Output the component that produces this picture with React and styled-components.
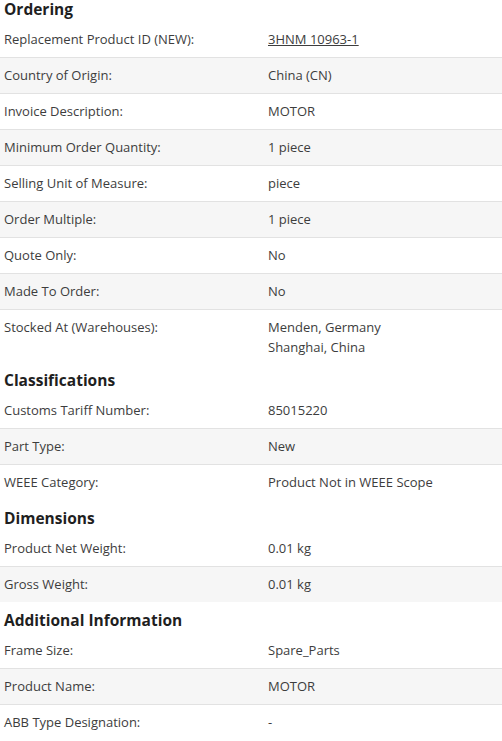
import React from 'react';
import styled, { createGlobalStyle } from 'styled-components';

const GlobalStyle = createGlobalStyle`
  body {
    margin: 0;
    background: #fff;
    font-family: "Open Sans", "Liberation Sans", sans-serif;
    color: #3d3d3d;
  }
`;

const Page = styled.div`
  width: 502px;
  margin-top: -9px;
`;

const SectionTitle = styled.h2`
  margin: 0;
  padding: 7px 4px 1px;
  font-size: 15.5px;
  line-height: 22px;
  font-weight: 700;
  color: #1f1f1f;
`;

const Row = styled.div`
  display: grid;
  grid-template-columns: 268px 1fr;
  padding-top: ${props => (props.$first ? '8px' : '7px')};
  padding-bottom: ${props => (props.$multi ? '5px' : '8px')};
  font-size: 13px;
  line-height: 20px;
  background: ${props => (props.$shaded ? '#f6f6f6' : '#fff')};
  border-top: ${props => (props.$first ? 'none' : '1px solid #e2e2e2')};
`;

const Label = styled.div`
  padding-left: 4px;
`;

const Value = styled.div`
  display: flex;
  flex-direction: column;
`;

const ProductLink = styled.a`
  color: #3d3d3d;
  text-decoration: underline;
`;

const sections = [
  {
    title: 'Ordering',
    rows: [
      ['Replacement Product ID (NEW):', <ProductLink href="#">3HNM 10963-1</ProductLink>],
      ['Country of Origin:', 'China (CN)'],
      ['Invoice Description:', 'MOTOR'],
      ['Minimum Order Quantity:', '1 piece'],
      ['Selling Unit of Measure:', 'piece'],
      ['Order Multiple:', '1 piece'],
      ['Quote Only:', 'No'],
      ['Made To Order:', 'No'],
      ['Stocked At (Warehouses):', ['Menden, Germany', 'Shanghai, China']],
    ],
  },
  {
    title: 'Classifications',
    rows: [
      ['Customs Tariff Number:', '85015220'],
      ['Part Type:', 'New'],
      ['WEEE Category:', 'Product Not in WEEE Scope'],
    ],
  },
  {
    title: 'Dimensions',
    rows: [
      ['Product Net Weight:', '0.01 kg'],
      ['Gross Weight:', '0.01 kg'],
    ],
  },
  {
    title: 'Additional Information',
    rows: [
      ['Frame Size:', 'Spare_Parts'],
      ['Product Name:', 'MOTOR'],
      ['ABB Type Designation:', '-'],
    ],
  },
];

const App = () => (
  <>
    <GlobalStyle />
    <Page>
      {sections.map(section => (
        <section key={section.title}>
          <SectionTitle>{section.title}</SectionTitle>
          {section.rows.map(([label, value], i) => {
            const multi = Array.isArray(value);
            return (
              <Row key={label} $first={i === 0} $shaded={i % 2 === 1} $multi={multi}>
                <Label>{label}</Label>
                <Value>
                  {multi ? value.map(line => <span key={line}>{line}</span>) : value}
                </Value>
              </Row>
            );
          })}
        </section>
      ))}
    </Page>
  </>
);

export default App;
